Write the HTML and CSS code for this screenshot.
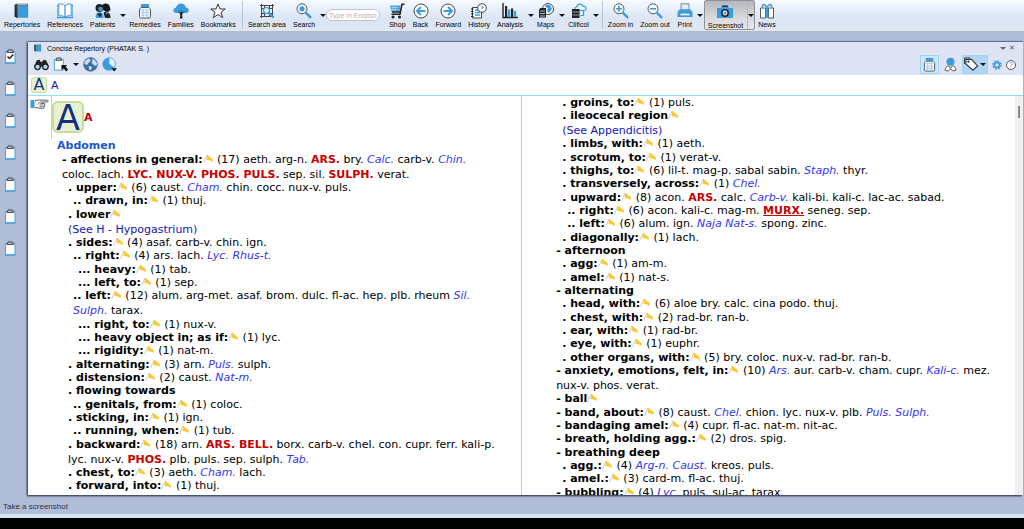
FILE: index.html
```html
<!DOCTYPE html>
<html lang="en">
<head>
    <meta charset="UTF-8">
    <meta name="viewport" content="width=device-width, initial-scale=1.0">
    <title>Concise Repertory (PHATAK S. )</title>
    <link rel="stylesheet" href="styles.css">
</head>
<body>
    <svg class="sprite" aria-hidden="true">
        <symbol id="i-book" viewBox="0 0 16 16">
            <path d="M1.5 1.5v12.5" stroke="#222" stroke-width="1.8"/>
            <path d="M3.6 2.4h10.6v12.4H2.4z" fill="#3b9bdc"/>
            <path d="M1.6 1.8 3 .8h11v1.6H3.4l.2 12.4H2z" fill="#333"/>
            <path d="M3.6 1.2h9.6v.7H3.6z" fill="#eee"/>
        </symbol>
        <symbol id="i-open-book" viewBox="0 0 16 16">
            <path d="M1.5 2.5H0v12h16v-12h-1.5" fill="none" stroke="#3b9bdc" stroke-width="1.3"/>
            <path d="M8 2.7C6.5 1 3.5.8 1.8 1v11.7c2-.2 4.7.1 6.2 1.6 1.5-1.5 4.2-1.8 6.2-1.6V1C12.5.8 9.5 1 8 2.7z" fill="#fff" stroke="#3b9bdc"/>
            <path d="M8 2.7v12" stroke="#2878b4"/>
        </symbol>
        <symbol id="i-patients" viewBox="0 0 16 16">
            <path d="M7 3C7.5-.5 14-.5 14.5 3l1 3.5-1.5 2-3 .5-4-3z" fill="#151515"/>
            <circle cx="4.5" cy="5" r="4" fill="#222"/>
            <circle cx="5.5" cy="6" r="2.3" fill="#3b9bdc"/>
            <path d="M1 15c-.8-3 .5-5.5 3.5-5.7 3 0 4.5 2.5 4 5.7z" fill="#3b9bdc"/>
            <path d="M2 10.5 5 14.5l2-4" fill="#222"/>
            <path d="M8.5 9.5c4-1.5 7 .5 7 5.5H10z" fill="#222"/>
            <path d="M10.5 9.5 12 12l1-3" fill="#3b9bdc"/>
        </symbol>
        <symbol id="i-jar" viewBox="0 0 16 16">
            <path d="M4 1h8v3H4z" fill="#3b9bdc"/>
            <path d="M4.5 4.5h7c1.3.5 2 1.2 2 2.5v6.8c0 .7-.5 1.2-1.2 1.2H3.7c-.7 0-1.2-.5-1.2-1.2V7c0-1.3.7-2 2-2.5z" fill="#f4fafd" stroke="#555"/>
            <path d="M4 7h8M4 9.5h8M4 12h8M6 6v8M10 6v8" stroke="#a4d0ec" stroke-width="1.1"/>
        </symbol>
        <symbol id="i-tree" viewBox="0 0 16 16">
            <path d="M4 10C1.5 10.5-.2 8.5.5 6.7 1 5 2.5 4.7 3 4.7 3.5 2 6 .3 8.5.6c2.5.2 4 2 4.3 4C15 4.5 16 6 15.7 7.7c-.3 1.8-2 2.5-3.7 2.2z" fill="#3b9bdc"/>
            <path d="M6.8 15.5c.6-1.5.5-3.5.2-4.7L4.7 8.5l2.8 1.2L8 6.5l.7 3.2 2.8-1.5-2.3 3c-.2 1.5 0 3 .5 4.3z" fill="#222"/>
        </symbol>
        <symbol id="i-star" viewBox="0 0 16 16">
            <path d="m8 1 2 5h5.2L11 9.300l1.700 5.400L8 11.500l-4.700 3.200L5 9.300.8 6H6z" fill="#fff" stroke="#333" stroke-linejoin="round"/>
        </symbol>
        <symbol id="i-search-area" viewBox="0 0 16 16">
            <path d="M1 2.5h14M1 13.5h14M2.5 1v14M13.5 1v14M5.5 2.5v11M10.5 2.5v11M2.5 5.5h11M2.5 10.5h11" stroke="#444" fill="none"/>
            <circle cx="7.5" cy="7.5" r="3" fill="#d8ecfa" stroke="#3b9bdc" stroke-width="1.2"/>
            <path d="m10 10 4.5 4.5" stroke="#3b9bdc" stroke-width="2.2"/>
        </symbol>
        <symbol id="i-search" viewBox="0 0 16 16">
            <circle cx="6" cy="5.8" r="5" fill="#f4fafd" stroke="#555"/>
            <circle cx="6" cy="5.8" r="2.6" fill="#3b9bdc"/>
            <path d="m9.8 9.6 5.2 5.2" stroke="#3b9bdc" stroke-width="2.6"/>
        </symbol>
        <symbol id="i-cart" viewBox="0 0 16 16">
            <path d="M1 2.5h10.5l-1 6H2.5z" fill="#3b9bdc"/>
            <path d="M2 4.5h8M2 6.5h8M4 3v5M6.5 3v5" stroke="#c8e4f6" stroke-width=".6"/>
            <path d="M15.5 1.2H13l-2 10H2.5M3 9h8" fill="none" stroke="#222" stroke-width="1.6"/>
            <circle cx="4" cy="14" r="1.5" fill="#222"/><circle cx="10.5" cy="14" r="1.5" fill="#222"/>
        </symbol>
        <symbol id="i-forward" viewBox="0 0 16 16">
            <circle cx="8" cy="8" r="7" fill="#fff" stroke="#444"/>
            <path d="M3.5 8h8M8 4l4 4-4 4" fill="none" stroke="#3b9bdc" stroke-width="2"/>
        </symbol>
        <symbol id="i-back" viewBox="0 0 16 16">
            <circle cx="8" cy="8" r="7" fill="#fff" stroke="#444"/>
            <path d="M12.5 8h-8M8 4 4 8l4 4" fill="none" stroke="#3b9bdc" stroke-width="2"/>
        </symbol>
        <symbol id="i-history" viewBox="0 0 16 16">
            <path d="M1.5 4.5h9v10.5h-9z" fill="#fff" stroke="#444"/>
            <path d="M0 6h2.5M0 8.5h2.5M0 11h2.5M0 13.5h2.5" stroke="#222"/>
            <path d="M4 7h4M4 9.5h5M4 12h5" stroke="#3b9bdc" stroke-width="1.3"/>
            <circle cx="11" cy="5" r="4.3" fill="#fff" stroke="#444"/>
            <path d="M11 2.5V5.5l2-1.5" fill="none" stroke="#3b9bdc"/>
        </symbol>
        <symbol id="i-analysis" viewBox="0 0 16 16">
            <path d="M1 0v14.5h15" fill="none" stroke="#222" stroke-width="1.4"/>
            <path d="M3 3h2.2v11H3zM9 5.5h2.2V14H9z" fill="#222"/>
            <path d="M6 6.5h2.2V14H6zM12 8h2.2v6H12z" fill="#3b9bdc"/>
        </symbol>
        <symbol id="i-maps" viewBox="0 0 16 16">
            <circle cx="10" cy="6" r="5.5" fill="#fff" stroke="#444"/>
            <path d="m8 1.5 4 .5 2 4-3 4-2-2 1-3-3-1z" fill="#3b9bdc"/>
            <path d="M1 6.5 2.5 5H8v9.5H1z" fill="#222"/>
            <path d="M2 8h5M2 10.5h5M2 13h5" stroke="#d8e4f0" stroke-width=".8"/>
        </symbol>
        <symbol id="i-cloud" viewBox="0 0 16 16">
            <path d="M5.5 7.5C3 7 3.5 4 5.7 4 6.5.5 11 .2 12 3.2c3-.3 4.3 3.5 1.5 4.3z" fill="#e6f4fd" stroke="#3b9bdc" stroke-width="1.2"/>
            <path d="M1 6h7.5v9H1z" fill="#222"/>
            <path d="M1.5 9h6.5M1.5 12h6.5" stroke="#c8d4e4" stroke-width=".7"/>
            <path d="M12.5 8v4.5h-3" fill="none" stroke="#3b9bdc" stroke-width="1.2"/>
        </symbol>
        <symbol id="i-zoom-in" viewBox="0 0 16 16">
            <circle cx="6" cy="5.8" r="5" fill="#f8fcff" stroke="#555"/>
            <path d="M3 5.8h6M6 2.8v6" stroke="#3b9bdc" stroke-width="1.6"/>
            <path d="m9.8 9.6 5.2 5.2" stroke="#3b9bdc" stroke-width="2.4"/>
        </symbol>
        <symbol id="i-zoom-out" viewBox="0 0 16 16">
            <circle cx="6" cy="5.8" r="5" fill="#f8fcff" stroke="#555"/>
            <path d="M3 5.8h6" stroke="#3b9bdc" stroke-width="1.6"/>
            <path d="m9.8 9.6 5.2 5.2" stroke="#3b9bdc" stroke-width="2.4"/>
        </symbol>
        <symbol id="i-print" viewBox="0 0 16 16">
            <path d="M4 .8h8V7H4z" fill="#dcecf8" stroke="#7a8a99"/>
            <path d="M2.5 6.5h11L15.5 9v5H.5V9z" fill="#3b9bdc"/>
            <path d="M3.5 11.5h9" stroke="#fff" stroke-width="1.6"/>
        </symbol>
        <symbol id="i-camera" viewBox="0 0 16 16">
            <path d="M0 4h4l1-2.5h6L12 4h4v10H0z" fill="#3b9bdc"/>
            <path d="M5 2.2h6" stroke="#222" stroke-width="1.2"/>
            <circle cx="8" cy="9" r="4" fill="#222"/>
            <circle cx="8" cy="9" r="2.4" fill="#fff"/><circle cx="8" cy="9" r="1.5" fill="#3b9bdc"/>
        </symbol>
        <symbol id="i-gift" viewBox="0 0 16 16">
            <path d="M1.5 5h5v10h-5zM9.5 5h5v10h-5z" fill="#fff" stroke="#555"/>
            <path d="M6.5 4.5h3V15h-3z" fill="#3b9bdc"/>
            <path d="M8 4.5C6 .5 3 .5 3.5 4M8 4.5c2-4 5-4 4.5-.5" fill="none" stroke="#3b9bdc" stroke-width="1.5"/>
        </symbol>
        <symbol id="i-clip" viewBox="0 0 16 16">
            <path d="M3.5 3.5h9.5v11.5H3.5z" fill="#fff" stroke="#4a9fd8"/>
            <path d="M3 15h10.5" stroke="#3b9bdc" stroke-width="1.2"/>
            <path d="M5 4.5 6 2h4.5l1 2.5z" fill="#b8c4d0" stroke="#333" stroke-width=".9"/>
        </symbol>
        <symbol id="i-clip-check" viewBox="0 0 16 16">
            <use href="#i-clip"/>
            <path d="m5.5 8.5 2 2 3.8-4" fill="none" stroke="#222" stroke-width="1.5"/>
        </symbol>
        <symbol id="i-clip-cursor" viewBox="0 0 16 16">
            <path d="M1.5 2.5h9.5v11.5H1.5z" fill="#fff" stroke="#4a9fd8"/>
            <path d="M3 3.5 4 1h4.5l1 2.5z" fill="#b8c4d0" stroke="#333" stroke-width=".9"/>
            <path d="M9 8.500h6l-1.500 1.700 2.500 3.300-2 2-2.700-3.500-2.300 2z" fill="#111"/>
        </symbol>
        <symbol id="i-binoculars" viewBox="0 0 16 16">
            <path d="M3 3.5 6 3l1 2h2l1-2 3 .5 3 7H0z" fill="#222"/>
            <circle cx="3.8" cy="10.5" r="3.6" fill="#222"/><circle cx="12.2" cy="10.5" r="3.6" fill="#222"/>
            <circle cx="3.8" cy="10.5" r="2.2" fill="#b9d9ee"/><circle cx="12.2" cy="10.5" r="2.2" fill="#b9d9ee"/>
        </symbol>
        <symbol id="i-globe" viewBox="0 0 16 16">
            <circle cx="8" cy="8" r="7.7" fill="#3f6fa5"/>
            <path d="M2 4.5 5.5 1.500 8 2.5 7.5 5l-2 1.5L4.500 8.500 1.5 7.5zM9.500 2l3 1 2.500 4-1 2.500-2.500-1-2.500-2.500 1-1.500zM6 9.500l3.5 1L8.5 14 6.500 13z" fill="#cfdfee"/>
        </symbol>
        <symbol id="i-pie" viewBox="0 0 16 16">
            <circle cx="7.5" cy="7.5" r="7" fill="#3b9bdc"/>
            <path d="M7.5 7.5V.5a7 7 0 0 1 5.5 11z" fill="#e2f2fd" stroke="#3b9bdc" stroke-width=".7"/>
            <path d="M10 12h6l-3 3.5z" fill="#111"/>
        </symbol>
        <symbol id="i-doctor" viewBox="0 0 16 16">
            <circle cx="8" cy="5" r="4.3" fill="#3b9bdc"/>
            <path d="M2.5 14.5c-.7-3 1.5-5 3.5-5l2 2.7 2-2.7c2 0 4.2 2 3.5 5l-3.5.2L8 12.3l-2 2.4z" fill="#fff" stroke="#555"/>
        </symbol>
        <symbol id="i-tag" viewBox="0 0 16 16">
            <path d="M2 2.5h6l6.5 7L9.5 14 2 7.5z" fill="#fff" stroke="#333" stroke-width="1.2"/>
            <circle cx="4.7" cy="5" r="1.2" fill="#333"/>
            <path d="M.5 7.5V1h6" fill="none" stroke="#333"/>
        </symbol>
        <symbol id="i-gear" viewBox="0 0 16 16">
            <circle cx="8" cy="8" r="4.2" fill="none" stroke="#3b9bdc" stroke-width="3"/>
            <circle cx="8" cy="8" r="6.5" fill="none" stroke="#3b9bdc" stroke-width="2.4" stroke-dasharray="2.55 2.55"/>
        </symbol>
        <symbol id="i-hand" viewBox="0 0 18 10">
            <path d="M0 1h4v8H0z" fill="#3b9bdc"/>
            <path d="M4.5 2 8 1l9 .3c1.2.4.8 1.7 0 1.7h-5M4.5 8.5l5 .8h3.3c1 0 1-1.5 0-1.6h.7c1-.2 1-1.6 0-1.7h.3c1-.2.8-1.6-.2-1.6H10" fill="#fff" stroke="#333" stroke-width=".8"/>
            <path d="M7 5.5 9.5 3H12M9 6h4M9 7.7h3" fill="none" stroke="#333" stroke-width=".7"/>
        </symbol>
    </svg>

    <header class="toolbar">
        <button class="tool"><svg><use href="#i-book"/></svg>Repertories</button>
        <button class="tool"><svg><use href="#i-open-book"/></svg>References</button>
        <button class="tool"><svg><use href="#i-patients"/></svg>Patients</button>
        <button class="arrow" aria-label="Patients menu"></button>
        <button class="tool"><svg><use href="#i-jar"/></svg>Remedies</button>
        <button class="tool"><svg><use href="#i-tree"/></svg>Families</button>
        <button class="tool"><svg><use href="#i-star"/></svg>Bookmarks</button>
        <span class="sep"></span>
        <button class="tool"><svg><use href="#i-search-area"/></svg>Search area</button>
        <button class="tool"><svg><use href="#i-search"/></svg>Search</button>
        <button class="arrow" aria-label="Search menu"></button>
        <input class="quick" type="text" placeholder="Type in English" aria-label="Type in English">
        <button class="tool"><svg><use href="#i-cart"/></svg>Shop</button>
        <button class="tool"><svg><use href="#i-back"/></svg>Back</button>
        <button class="tool"><svg><use href="#i-forward"/></svg>Forward</button>
        <button class="tool"><svg><use href="#i-history"/></svg>History</button>
        <button class="tool"><svg><use href="#i-analysis"/></svg>Analysis</button>
        <button class="arrow" aria-label="Analysis menu"></button>
        <button class="tool"><svg><use href="#i-maps"/></svg>Maps</button>
        <button class="arrow" aria-label="Maps menu"></button>
        <button class="tool"><svg><use href="#i-cloud"/></svg>Clificol</button>
        <button class="arrow" aria-label="Clificol menu"></button>
        <span class="sep"></span>
        <button class="tool"><svg><use href="#i-zoom-in"/></svg>Zoom in</button>
        <button class="tool"><svg><use href="#i-zoom-out"/></svg>Zoom out</button>
        <button class="tool"><svg><use href="#i-print"/></svg>Print</button>
        <button class="arrow" aria-label="Print menu"></button>
        <div class="pressed">
            <button class="tool"><svg><use href="#i-camera"/></svg>Screenshot</button>
            <button class="arrow" aria-label="Screenshot menu"></button>
        </div>
        <button class="tool"><svg><use href="#i-gift"/></svg>News</button>
    </header>

    <main class="desk">
        <nav class="clips">
            <button aria-label="Clipboard 1"><svg><use href="#i-clip-check"/></svg></button>
            <button aria-label="Clipboard 2"><svg><use href="#i-clip"/></svg></button>
            <button aria-label="Clipboard 3"><svg><use href="#i-clip"/></svg></button>
            <button aria-label="Clipboard 4"><svg><use href="#i-clip"/></svg></button>
            <button aria-label="Clipboard 5"><svg><use href="#i-clip"/></svg></button>
            <button aria-label="Clipboard 6"><svg><use href="#i-clip"/></svg></button>
            <button aria-label="Clipboard 7"><svg><use href="#i-clip"/></svg></button>
        </nav>

        <section class="window">
            <div class="titlebar">
                <svg><use href="#i-book"/></svg>
                <span class="title">Concise Repertory (PHATAK S. )</span>
                <button class="arrow grey" aria-label="Minimize"></button>
                <button class="close" aria-label="Close">✕</button>
            </div>
            <div class="tools">
                <button aria-label="Find"><svg><use href="#i-binoculars"/></svg></button>
                <button aria-label="Take rubric"><svg><use href="#i-clip-cursor"/></svg></button>
                <button class="arrow" aria-label="Clipboard menu"></button>
                <button aria-label="Language"><svg><use href="#i-globe"/></svg></button>
                <button aria-label="Chart"><svg><use href="#i-pie"/></svg></button>
                <span class="space"></span>
                <button class="on" aria-label="Remedies"><svg><use href="#i-jar"/></svg></button>
                <button aria-label="Authors"><svg><use href="#i-doctor"/></svg></button>
                <div class="split">
                    <button aria-label="Tags"><svg><use href="#i-tag"/></svg></button>
                    <button class="arrow" aria-label="Tags menu"></button>
                </div>
                <button class="small" aria-label="Settings"><svg><use href="#i-gear"/></svg></button>
                <button class="help" aria-label="Help">?</button>
            </div>
            <div class="crumbs">
                <span class="letter">A</span>
                <a href="#abdomen">A</a>
            </div>

            <div class="book">
                <div class="gutter"><svg><use href="#i-hand"/></svg></div>
                <div class="column">
                    <div class="chapter"><span class="letter big">A</span><b>A</b></div>
                    <h2 id="abdomen">Abdomen</h2>
                    <div class="rubrics">
                        <p class="two"><b>- affections in general:</b><i class="flag"></i> (17) aeth. arg-n. <strong>ARS.</strong> bry. <em>Calc.</em> carb-v. <em>Chin.</em> coloc. lach. <strong>LYC. NUX-V. PHOS. PULS.</strong> sep. sil. <strong>SULPH.</strong> verat.</p>
                        <p class="l1"><b>. upper:</b><i class="flag"></i> (6) caust. <em>Cham.</em> chin. cocc. nux-v. puls.</p>
                        <p class="l2"><b>.. drawn, in:</b><i class="flag"></i> (1) thuj.</p>
                        <p class="l1 two"><b>. lower</b><i class="flag"></i><br><a href="#hypogastrium">(See H - Hypogastrium)</a></p>
                        <p class="l1"><b>. sides:</b><i class="flag"></i> (4) asaf. carb-v. chin. ign.</p>
                        <p class="l2"><b>.. right:</b><i class="flag"></i> (4) ars. lach. <em>Lyc. Rhus-t.</em></p>
                        <p class="l3"><b>... heavy:</b><i class="flag"></i> (1) tab.</p>
                        <p class="l3"><b>... left, to:</b><i class="flag"></i> (1) sep.</p>
                        <p class="l2 two"><b>.. left:</b><i class="flag"></i> (12) alum. arg-met. asaf. brom. dulc. fl-ac. hep. plb. rheum <em>Sil. Sulph.</em> tarax.</p>
                        <p class="l3"><b>... right, to:</b><i class="flag"></i> (1) nux-v.</p>
                        <p class="l3"><b>... heavy object in; as if:</b><i class="flag"></i> (1) lyc.</p>
                        <p class="l3"><b>... rigidity:</b><i class="flag"></i> (1) nat-m.</p>
                        <p class="l1"><b>. alternating:</b><i class="flag"></i> (3) arn. <em>Puls.</em> sulph.</p>
                        <p class="l1"><b>. distension:</b><i class="flag"></i> (2) caust. <em>Nat-m.</em></p>
                        <p class="l1"><b>. flowing towards</b></p>
                        <p class="l2"><b>.. genitals, from:</b><i class="flag"></i> (1) coloc.</p>
                        <p class="l1"><b>. sticking, in:</b><i class="flag"></i> (1) ign.</p>
                        <p class="l2"><b>.. running, when:</b><i class="flag"></i> (1) tub.</p>
                        <p class="l1 two"><b>. backward:</b><i class="flag"></i> (18) arn. <strong>ARS. BELL.</strong> borx. carb-v. chel. con. cupr. ferr. kali-p. lyc. nux-v. <strong>PHOS.</strong> plb. puls. sep. sulph. <em>Tab.</em></p>
                        <p class="l1"><b>. chest, to:</b><i class="flag"></i> (3) aeth. <em>Cham.</em> lach.</p>
                        <p class="l1"><b>. forward, into:</b><i class="flag"></i> (1) thuj.</p>
                    </div>
                </div>
                <div class="column right">
                    <div class="rubrics">
                        <p class="l1"><b>. groins, to:</b><i class="flag"></i> (1) puls.</p>
                        <p class="l1 two"><b>. ileocecal region</b><i class="flag"></i><br><a href="#appendicitis">(See Appendicitis)</a></p>
                        <p class="l1"><b>. limbs, with:</b><i class="flag"></i> (1) aeth.</p>
                        <p class="l1"><b>. scrotum, to:</b><i class="flag"></i> (1) verat-v.</p>
                        <p class="l1"><b>. thighs, to:</b><i class="flag"></i> (6) lil-t. mag-p. sabal sabin. <em>Staph.</em> thyr.</p>
                        <p class="l1"><b>. transversely, across:</b><i class="flag"></i> (1) <em>Chel.</em></p>
                        <p class="l1"><b>. upward:</b><i class="flag"></i> (8) acon. <strong>ARS.</strong> calc. <em>Carb-v.</em> kali-bi. kali-c. lac-ac. sabad.</p>
                        <p class="l2"><b>.. right:</b><i class="flag"></i> (6) acon. kali-c. mag-m. <strong><u>MURX.</u></strong> seneg. sep.</p>
                        <p class="l2"><b>.. left:</b><i class="flag"></i> (6) alum. ign. <em>Naja Nat-s.</em> spong. zinc.</p>
                        <p class="l1"><b>. diagonally:</b><i class="flag"></i> (1) lach.</p>
                        <p><b>- afternoon</b></p>
                        <p class="l1"><b>. agg:</b><i class="flag"></i> (1) am-m.</p>
                        <p class="l1"><b>. amel:</b><i class="flag"></i> (1) nat-s.</p>
                        <p><b>- alternating</b></p>
                        <p class="l1"><b>. head, with:</b><i class="flag"></i> (6) aloe bry. calc. cina podo. thuj.</p>
                        <p class="l1"><b>. chest, with:</b><i class="flag"></i> (2) rad-br. ran-b.</p>
                        <p class="l1"><b>. ear, with:</b><i class="flag"></i> (1) rad-br.</p>
                        <p class="l1"><b>. eye, with:</b><i class="flag"></i> (1) euphr.</p>
                        <p class="l1"><b>. other organs, with:</b><i class="flag"></i> (5) bry. coloc. nux-v. rad-br. ran-b.</p>
                        <p class="two"><b>- anxiety, emotions, felt, in:</b><i class="flag"></i> (10) <em>Ars.</em> aur. carb-v. cham. cupr. <em>Kali-c.</em> mez. nux-v. phos. verat.</p>
                        <p><b>- ball</b><i class="flag"></i></p>
                        <p><b>- band, about:</b><i class="flag"></i> (8) caust. <em>Chel.</em> chion. lyc. nux-v. plb. <em>Puls. Sulph.</em></p>
                        <p><b>- bandaging amel:</b><i class="flag"></i> (4) cupr. fl-ac. nat-m. nit-ac.</p>
                        <p><b>- breath, holding agg.:</b><i class="flag"></i> (2) dros. spig.</p>
                        <p><b>- breathing deep</b></p>
                        <p class="l1"><b>. agg.:</b><i class="flag"></i> (4) <em>Arg-n. Caust.</em> kreos. puls.</p>
                        <p class="l1"><b>. amel.:</b><i class="flag"></i> (3) card-m. fl-ac. thuj.</p>
                        <p><b>- bubbling:</b><i class="flag"></i> (4) <em>Lyc.</em> puls. sul-ac. tarax.</p>
                    </div>
                </div>
                <div class="scroll"><span class="thumb"></span></div>
            </div>
        </section>
    </main>

    <footer class="status">Take a screenshot</footer>
    <div class="taskbar"></div>
</body>
</html>
```
FILE: styles.css
```css
* {
    box-sizing: border-box;
}

body {
    margin: 0;
    height: 100vh;
    display: flex;
    flex-direction: column;
    overflow: hidden;
    background-color: #b0bdd9;
    color: #000;
    font-family: "Liberation Sans", Arial, sans-serif;
    font-size: 7px;
}

button {
    padding: 0;
    border: none;
    background: none;
    color: inherit;
    font: inherit;
    cursor: pointer;
}

svg {
    display: block;
    flex: none;
    width: 16px;
    height: 16px;
}

.sprite {
    position: absolute;
    width: 0;
    height: 0;
}

/* main toolbar */
.toolbar {
    display: flex;
    flex: none;
    height: 32px;
    padding-left: 1px;
    background: linear-gradient(#f8fbff, #e4eefa 35%, #dbe5f4 60%, #dde7f6);
    border-bottom: 1px solid #b5b9c0;
}

.tool {
    display: flex;
    flex-direction: column;
    align-items: center;
    padding: 3px 4px 0 3px;
    line-height: 11px;
    white-space: nowrap;
}

.arrow {
    display: flex;
    align-items: center;
    justify-content: center;
    width: 7px;
}

.arrow::after {
    content: "";
    border: 3px solid transparent;
    border-top-color: #111;
    border-bottom: 0;
}

.sep {
    width: 1px;
    height: 28px;
    margin: 1px 2px 0;
    background-color: #b9c2d0;
}

.quick {
    align-self: flex-start;
    width: 54px;
    height: 12px;
    margin: 9px 6px 0 0;
    padding: 0 2px;
    border: 1px solid #c4c4c4;
    border-radius: 6px;
    font: inherit;
}

.quick::placeholder {
    color: #b5b5b5;
}

.pressed {
    display: flex;
    height: 30px;
    border: 1px solid #8e9298;
    border-radius: 2px;
    background: linear-gradient(#b4b8bf, #d8d9db 60%, #e8e8e8);
}

.pressed .arrow {
    border-left: 1px solid #b5b8bd;
}

/* left strip and window */
.desk {
    display: flex;
    flex: 1;
    min-height: 0;
    padding: 9px 1px 0 0;
}

.clips {
    display: flex;
    flex-direction: column;
    gap: 16px;
    width: 28px;
    padding: 7px 0 0 2px;
}

.window {
    display: flex;
    flex: 1;
    flex-direction: column;
    min-width: 0;
    border-top: 1px solid #56789f;
    background-color: #fff;
    box-shadow: -1px 1px 2px #1b2438;
}

.titlebar {
    display: flex;
    align-items: center;
    height: 12px;
    padding: 0 5px 0 6px;
    background-color: #dee4f3;
}

.titlebar svg {
    width: 8px;
    height: 8px;
}

.title {
    flex: 1;
    padding-left: 5px;
}

.grey::after {
    border-top-color: #666;
}

.close {
    width: 12px;
    color: #555;
}

.tools {
    display: flex;
    align-items: center;
    gap: 4px;
    height: 21px;
    padding: 0 7px 0 6px;
    background-color: #dee4f3;
}

.tools svg {
    width: 15px;
    height: 15px;
}

.space {
    flex: 1;
}

.on,
.split {
    display: flex;
    padding: 1px;
    border: 1px solid #9fd4f7;
    background-color: #cce8ff;
}

.split {
    background-color: #b3d5f5;
}

.tools .small svg {
    width: 10px;
    height: 10px;
}

.help {
    width: 10px;
    height: 10px;
    border: 1px solid #555;
    border-radius: 50%;
    background-color: #fff;
    color: #2f86c5;
    line-height: 8px;
}

.crumbs {
    display: flex;
    align-items: center;
    gap: 4px;
    height: 20px;
    padding-left: 3px;
    font-family: "DejaVu Sans", sans-serif;
    font-size: 11px;
}

.letter {
    width: 16px;
    height: 16px;
    border: 1px solid #c6dc9a;
    border-radius: 3px;
    background-color: #e8f0d2;
    color: #12307f;
    font-family: "DejaVu Sans", sans-serif;
    font-size: 16px;
    line-height: 14px;
    text-align: center;
}

.big {
    width: 32px;
    height: 32px;
    border-width: 2px;
    border-radius: 6px;
    font-size: 35px;
    line-height: 30px;
}

a {
    color: #1414b4;
    text-decoration: none;
}

/* repertory pages */
.book {
    display: grid;
    flex: 1;
    grid-template-columns: 24px 19fr 20fr 8px;
    min-height: 0;
    overflow: hidden;
    border-top: 1px solid #8fe0f8;
    font-family: "DejaVu Sans", sans-serif;
    font-size: 11px;
}

.gutter {
    height: 43px;
    padding: 3px 0 0 2px;
    border-right: 1px solid #8fe0f8;
}

.gutter svg {
    width: 19px;
    height: 10px;
}

.column {
    padding: 5px 23px 0 10px;
}

.right {
    padding: 0 18px 0 34px;
    border-left: 1px solid #8fe0f8;
}

.chapter {
    display: flex;
    align-items: center;
    margin-left: -10px;
    color: #b00;
}

h2 {
    margin: 6px 0 0 -5px;
    color: #2058c8;
    font-size: 11px;
    line-height: 14px;
}

.rubrics p {
    margin: 0;
    line-height: 13px;
}

.rubrics p:nth-child(3n) {
    padding-bottom: 1px;
}

.rubrics .two {
    margin: -1px 0;
    line-height: 15px;
}

.rubrics .l1 {
    margin-left: 6px;
}

.rubrics .l2 {
    margin-left: 11px;
}

.rubrics .l3 {
    margin-left: 16px;
}

em {
    color: #3434f4;
}

strong {
    color: #c80000;
}

.flag {
    display: inline-block;
    width: 10px;
    height: 9px;
    margin-right: 1px;
    background: url("data:image/svg+xml,%3Csvg xmlns='http://www.w3.org/2000/svg' viewBox='0 0 10 9'%3E%3Cpath d='M.5 9 4 1' stroke='%23ccc'/%3E%3Cpath d='M4 .5 10 5.500 9.500 8 7 6.500 3.500 6z' fill='%23fcc830'/%3E%3C/svg%3E") no-repeat;
}

.scroll {
    display: flex;
    justify-content: center;
    padding-top: 10px;
    background-color: #efefef;
}

.thumb {
    width: 2px;
    height: 12px;
    background-color: #8a8a8a;
}

.status {
    flex: none;
    height: 19px;
    padding: 5px 3px 0;
    color: #333;
    font-size: 8px;
    line-height: 14px;
}

.taskbar {
    flex: none;
    height: 15px;
    border-top: 4px solid #cfe6ee;
    background-color: #000;
}
```
